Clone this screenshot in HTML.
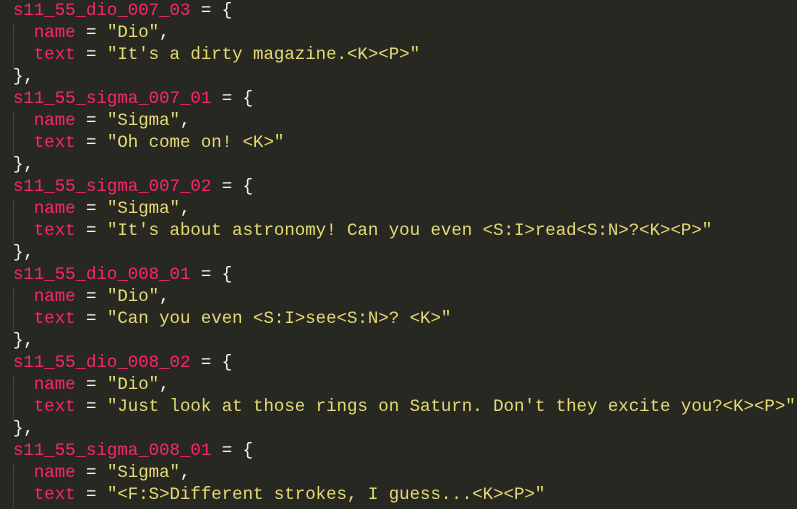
<!DOCTYPE html>
<html><head><meta charset="utf-8"><style>
html,body{margin:0;padding:0;background:#272822;width:797px;height:509px;overflow:hidden}
pre{margin:0;position:absolute;left:13px;top:1px;font-family:"Liberation Mono",monospace;font-size:17.4px;line-height:22px;color:#f8f8f2;white-space:pre}
.k{color:#f92672}.s{color:#e6db74}
.g{position:absolute;left:13px;width:0;border-left:1px dotted #555}
</style></head><body>
<div class="g" style="top:24px;height:44px"></div>
<div class="g" style="top:112px;height:44px"></div>
<div class="g" style="top:200px;height:44px"></div>
<div class="g" style="top:288px;height:44px"></div>
<div class="g" style="top:376px;height:44px"></div>
<div class="g" style="top:464px;height:44px"></div>
<pre><span class="k">s11_55_dio_007_03</span> = {
  <span class="k">name</span> = <span class="s">"Dio"</span>,
  <span class="k">text</span> = <span class="s">"It's a dirty magazine.&lt;K&gt;&lt;P&gt;"</span>
},
<span class="k">s11_55_sigma_007_01</span> = {
  <span class="k">name</span> = <span class="s">"Sigma"</span>,
  <span class="k">text</span> = <span class="s">"Oh come on! &lt;K&gt;"</span>
},
<span class="k">s11_55_sigma_007_02</span> = {
  <span class="k">name</span> = <span class="s">"Sigma"</span>,
  <span class="k">text</span> = <span class="s">"It's about astronomy! Can you even &lt;S:I&gt;read&lt;S:N&gt;?&lt;K&gt;&lt;P&gt;"</span>
},
<span class="k">s11_55_dio_008_01</span> = {
  <span class="k">name</span> = <span class="s">"Dio"</span>,
  <span class="k">text</span> = <span class="s">"Can you even &lt;S:I&gt;see&lt;S:N&gt;? &lt;K&gt;"</span>
},
<span class="k">s11_55_dio_008_02</span> = {
  <span class="k">name</span> = <span class="s">"Dio"</span>,
  <span class="k">text</span> = <span class="s">"Just look at those rings on Saturn. Don't they excite you?&lt;K&gt;&lt;P&gt;"</span>
},
<span class="k">s11_55_sigma_008_01</span> = {
  <span class="k">name</span> = <span class="s">"Sigma"</span>,
  <span class="k">text</span> = <span class="s">"&lt;F:S&gt;Different strokes, I guess...&lt;K&gt;&lt;P&gt;"</span>
</pre>
</body></html>
